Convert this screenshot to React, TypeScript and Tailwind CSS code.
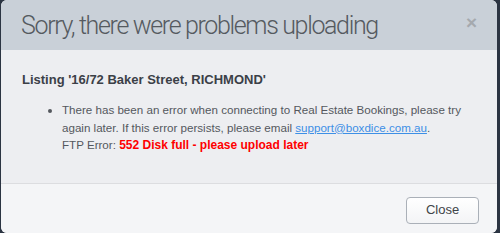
export default function App() {
  return (
    <div className="h-[233px] w-[500px] bg-[#2b3442] pl-px pr-[3px] font-['Liberation_Sans',Arial,sans-serif]">
      <div className="flex h-full flex-col overflow-hidden rounded-[6px] bg-[#edeef1]">
        <div className="flex h-[50px] shrink-0 items-center justify-between bg-[#c9d0d8] pl-[20px] pr-[20px]">
          <h1 className="font-['Roboto',sans-serif] text-[25px] leading-none font-light tracking-[-1.35px] text-[#555a60]">
            Sorry, there were problems uploading
          </h1>
          <button className="-mt-[5px] text-[19px] leading-none font-bold text-[#a5a9ae]">×</button>
        </div>

        <div className="flex-1 px-[21px] pt-[22px]">
          <h2 className="text-[13px] leading-[16px] font-bold text-[#3b4047]">
            Listing '16/72 Baker Street, RICHMOND'
          </h2>
          <ul className="mt-[13px] list-disc pl-[40px] text-[11.6px] leading-[17.5px] text-[#54585e]">
            <li>
              There has been an error when connecting to Real Estate Bookings, please try again later. If this error
              persists, please email{" "}
              <a href="#" className="text-[#3d8fe6] underline">
                support@boxdice.com.au
              </a>
              .
              <br />
              FTP Error: <span className="text-[12px] font-bold text-[#ff0000]">552 Disk full - please upload later</span>
            </li>
          </ul>
        </div>

        <div className="flex h-[50px] shrink-0 items-center justify-end border-t border-[#dcdde0] bg-[#f4f5f7] pr-[18px]">
          <button className="mt-[3px] h-[27px] w-[73px] rounded-[4px] border border-[#aab0b8] bg-gradient-to-b from-white to-[#f3f4f6] text-[13px] text-[#404448]">
            Close
          </button>
        </div>
      </div>
    </div>
  );
}
